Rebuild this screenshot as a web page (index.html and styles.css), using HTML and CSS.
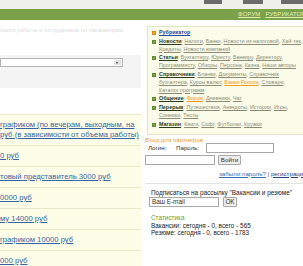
FILE: index.html
```html
<!DOCTYPE html>
<html lang="ru">
<head>
<meta charset="utf-8">
<link rel="stylesheet" href="styles.css">
</head>
<body>
<div class="top">
  <span class="tab t1"></span><span class="tab t2"></span><span class="tab t3"></span>
</div>
<div class="nav"><a href="#">ФОРУМ</a><a href="#">РУБРИКАТОР</a></div>
<div class="main">
  <div class="left">
    <div class="crumb">поиск работы и сотрудников по параметрам</div>
    <div class="filter"><div class="select"><span class="arrow"></span></div></div>
    <div class="list">
      <div class="row"><a href="#">графиком (по вечерам, выходным, на</a><br><a href="#">руб (в зависимости от объема работы)</a></div>
      <div class="row"><a href="#">0 руб</a></div>
      <div class="row"><a href="#">товый представитель 3000 руб</a></div>
      <div class="row"><a href="#">0000 руб</a></div>
      <div class="row"><a href="#">му 14000 руб</a></div>
      <div class="row"><a href="#">графиком 10000 руб</a></div>
      <div class="row"><a href="#">000 руб</a></div>
    </div>
  </div>
  <div class="right">
    <div class="rubr">
      <div class="grp"><i class="b o"></i><div><a href="#" class="blue">Рубрикатор</a></div></div>
      <div class="grp"><i class="b"></i><div><a href="#" class="hd">Новости</a>: <a href="#">Налоги</a>, <a href="#">Банки</a>, <a href="#">Новости из налоговой</a>, <a href="#">Хай-тек</a>,<br><a href="#">Кредиты</a>, <a href="#">Новости компаний</a></div></div>
      <div class="grp"><i class="b"></i><div><a href="#" class="hd">Статьи</a>: <a href="#">Бухгалтеру</a>, <a href="#">Юристу</a>, <a href="#">Банкиру</a>, <a href="#">Директору</a>,<br><a href="#">Программисту</a>, <a href="#">Обзоры</a>, <a href="#">Персона</a>, <a href="#">Казна</a>, <a href="#">Наши авторы</a></div></div>
      <div class="grp"><i class="b"></i><div><a href="#" class="hd">Справочники</a>: <a href="#">Бланки</a>, <a href="#">Документы</a>, <a href="#">Справочник</a><br><a href="#">бухгалтера</a>, <a href="#">Курсы валют</a>, <a href="#" class="or">Банки России</a>, <a href="#">Словари</a>,<br><a href="#">Каталог программ</a></div></div>
      <div class="grp"><i class="b"></i><div><a href="#" class="hd">Общение</a>: <a href="#" class="or">Форум</a>, <a href="#">Дневники</a>, <a href="#">Чат</a></div></div>
      <div class="grp"><i class="b"></i><div><a href="#" class="hd">Перерыв</a>: <a href="#">Путешествия</a>, <a href="#">Анекдоты</a>, <a href="#">Истории</a>, <a href="#">Игры</a>,<br><a href="#">Сонники</a>, <a href="#">Тесты</a></div></div>
      <div class="grp"><i class="b"></i><div><a href="#" class="hd">Магазин</a>: <a href="#">Книги</a>, <a href="#">Софт</a>, <a href="#">Футболки</a>, <a href="#">Кружки</a></div></div>
    </div>
    <div class="login">
      <div class="ltitle">Вход для партнеров</div>
      <div class="lrow"><span class="lbl l1">Логин:</span><span class="lbl l2">Пароль:</span><span class="inp i1"></span></div>
      <div class="lrow r2"><span class="inp i2"></span><span class="btn go">Войти</span></div>
      <div class="links"><a href="#">забыли пароль?</a> | <a href="#" class="dk">регистрация</a></div>
    </div>
    <div class="sep"></div>
    <div class="subs">
      <div class="stext">Подписаться на рассылку "Вакансии и резюме"</div>
      <div class="srow"><span class="inp i3">Ваш E-mail</span><span class="btn ok">OK</span></div>
      <div class="sttl">Статистика</div>
      <div class="sline">Вакансии: сегодня - 0, всего - 565</div>
      <div class="sline">Резюме: сегодня - 0, всего - 1783</div>
    </div>
  </div>
</div>
</body>
</html>
```

FILE: styles.css
```css
html, body {
  margin: 0;
  padding: 0;
  background: #fff;
}
body {
  width: 303px;
  height: 266px;
  overflow: hidden;
  font-family: "Liberation Sans", Arial, sans-serif;
  color: #222;
}
a { color: inherit; }

.top {
  height: 9px;
  background: #eef0e9;
  display: flex;
  align-items: flex-start;
}
.tab {
  display: block;
  height: 4px;
  background: #6c6c6c;
}
.t1 { margin-left: 204px; width: 19px; }
.t2 { margin-left: 21px; width: 22px; }
.t3 { margin-left: 18px; width: 22px; flex: none; }

.nav {
  height: 11px;
  background: #7ba24b;
  display: flex;
  align-items: center;
  padding-left: 238px;
  gap: 5px;
  white-space: nowrap;
  font-size: 6px;
  line-height: 11px;
}
.nav a { color: #e4eeb4; letter-spacing: 0.1px; }

.main {
  display: grid;
  grid-template-columns: 141px 170px;
  column-gap: 4px;
  padding-top: 6px;
}
.left { overflow: hidden; }

.crumb {
  height: 8px;
  font-size: 6px;
  line-height: 8px;
  color: #dcdcdc;
  white-space: nowrap;
}
.filter {
  margin-top: 21px;
  height: 33px;
  background: #f4f4f4;
  padding-top: 3px;
  box-sizing: border-box;
}
.select {
  width: 123px;
  height: 9px;
  box-sizing: border-box;
  background: #fff;
  border: 1px solid #b5b5b5;
  display: flex;
  justify-content: flex-end;
  padding: 1px;
}
.arrow {
  width: 7px;
  height: 5px;
  background: #e4e4e4;
  position: relative;
}
.arrow::after {
  content: "";
  position: absolute;
  left: 2px;
  top: 1.5px;
  border-left: 1.5px solid transparent;
  border-right: 1.5px solid transparent;
  border-top: 2px solid #333;
}

.list {
  margin-top: 26px;
  border-top: 1px solid #ecebcc;
}
.row {
  background: #fdfde8;
  border-bottom: 1px solid #e9e8c8;
  padding: 5px 0;
  font-size: 7.7px;
  line-height: 10px;
  white-space: nowrap;
}
.row a { color: #3464a2; }

.rubr {
  margin-left: 2px;
  background: #fbfbe9;
  border: 1px solid #dfe4c2;
  padding: 2px 0 4px 4px;
  font-size: 5.4px;
  line-height: 7.8px;
  white-space: nowrap;
  color: #555;
}
.grp {
  display: grid;
  grid-template-columns: 7px 1fr;
  margin-bottom: 1px;
}
.grp a { color: #8c8c76; }
.grp a.hd { color: #2c3a1c; font-weight: bold; }
.grp a.blue { color: #2a46a0; font-weight: bold; }
.grp a.or { color: #f09a20; }
.b {
  display: block;
  width: 4px;
  height: 4px;
  margin-top: 2px;
  box-sizing: border-box;
  background: #7ba24b;
  border: 1px solid #5f8a36;
}
.b.o { background: #f3a62c; border-color: #d98a1a; }

.login {
  padding-top: 1px;
  font-size: 6.2px;
  line-height: 7px;
  white-space: nowrap;
}
.ltitle { color: #eaa043; }
.lrow {
  display: flex;
  align-items: center;
  height: 10px;
}
.lrow.r2 { margin-top: 2px; }
.lbl { color: #333; box-sizing: border-box; }
.l1 { width: 31px; padding-left: 3px; }
.l2 { width: 30px; }
.inp {
  display: block;
  box-sizing: border-box;
  height: 10px;
  background: #fff;
  border: 1px solid #a8a8a8;
}
.i1 { width: 68px; }
.i2 { width: 70px; }
.btn {
  display: block;
  box-sizing: border-box;
  height: 10px;
  line-height: 8px;
  text-align: center;
  background: #ececec;
  border: 1px solid #a9a9a9;
  border-radius: 1px;
  color: #333;
}
.go { width: 23px; margin-left: 3px; }
.links {
  margin-top: 5px;
  line-height: 8px;
  padding-left: 74px;
  color: #555;
}
.links a { color: #3a6bb0; }
.links a.dk { color: #24428a; }

.sep {
  margin-top: 5px;
  height: 1px;
  background: #e4e4e4;
}
.subs {
  padding-left: 6px;
  padding-top: 5px;
  font-size: 6.4px;
  line-height: 7.6px;
  white-space: nowrap;
  color: #222;
}
.srow {
  display: flex;
  align-items: center;
  margin-top: 1px;
  margin-left: -2px;
}
.i3 {
  width: 70px;
  line-height: 8px;
  padding-left: 2px;
  color: #333;
}
.ok { margin-left: 4px; width: 14px; }
.sttl { color: #6e9e35; margin-top: 7px; }
```
